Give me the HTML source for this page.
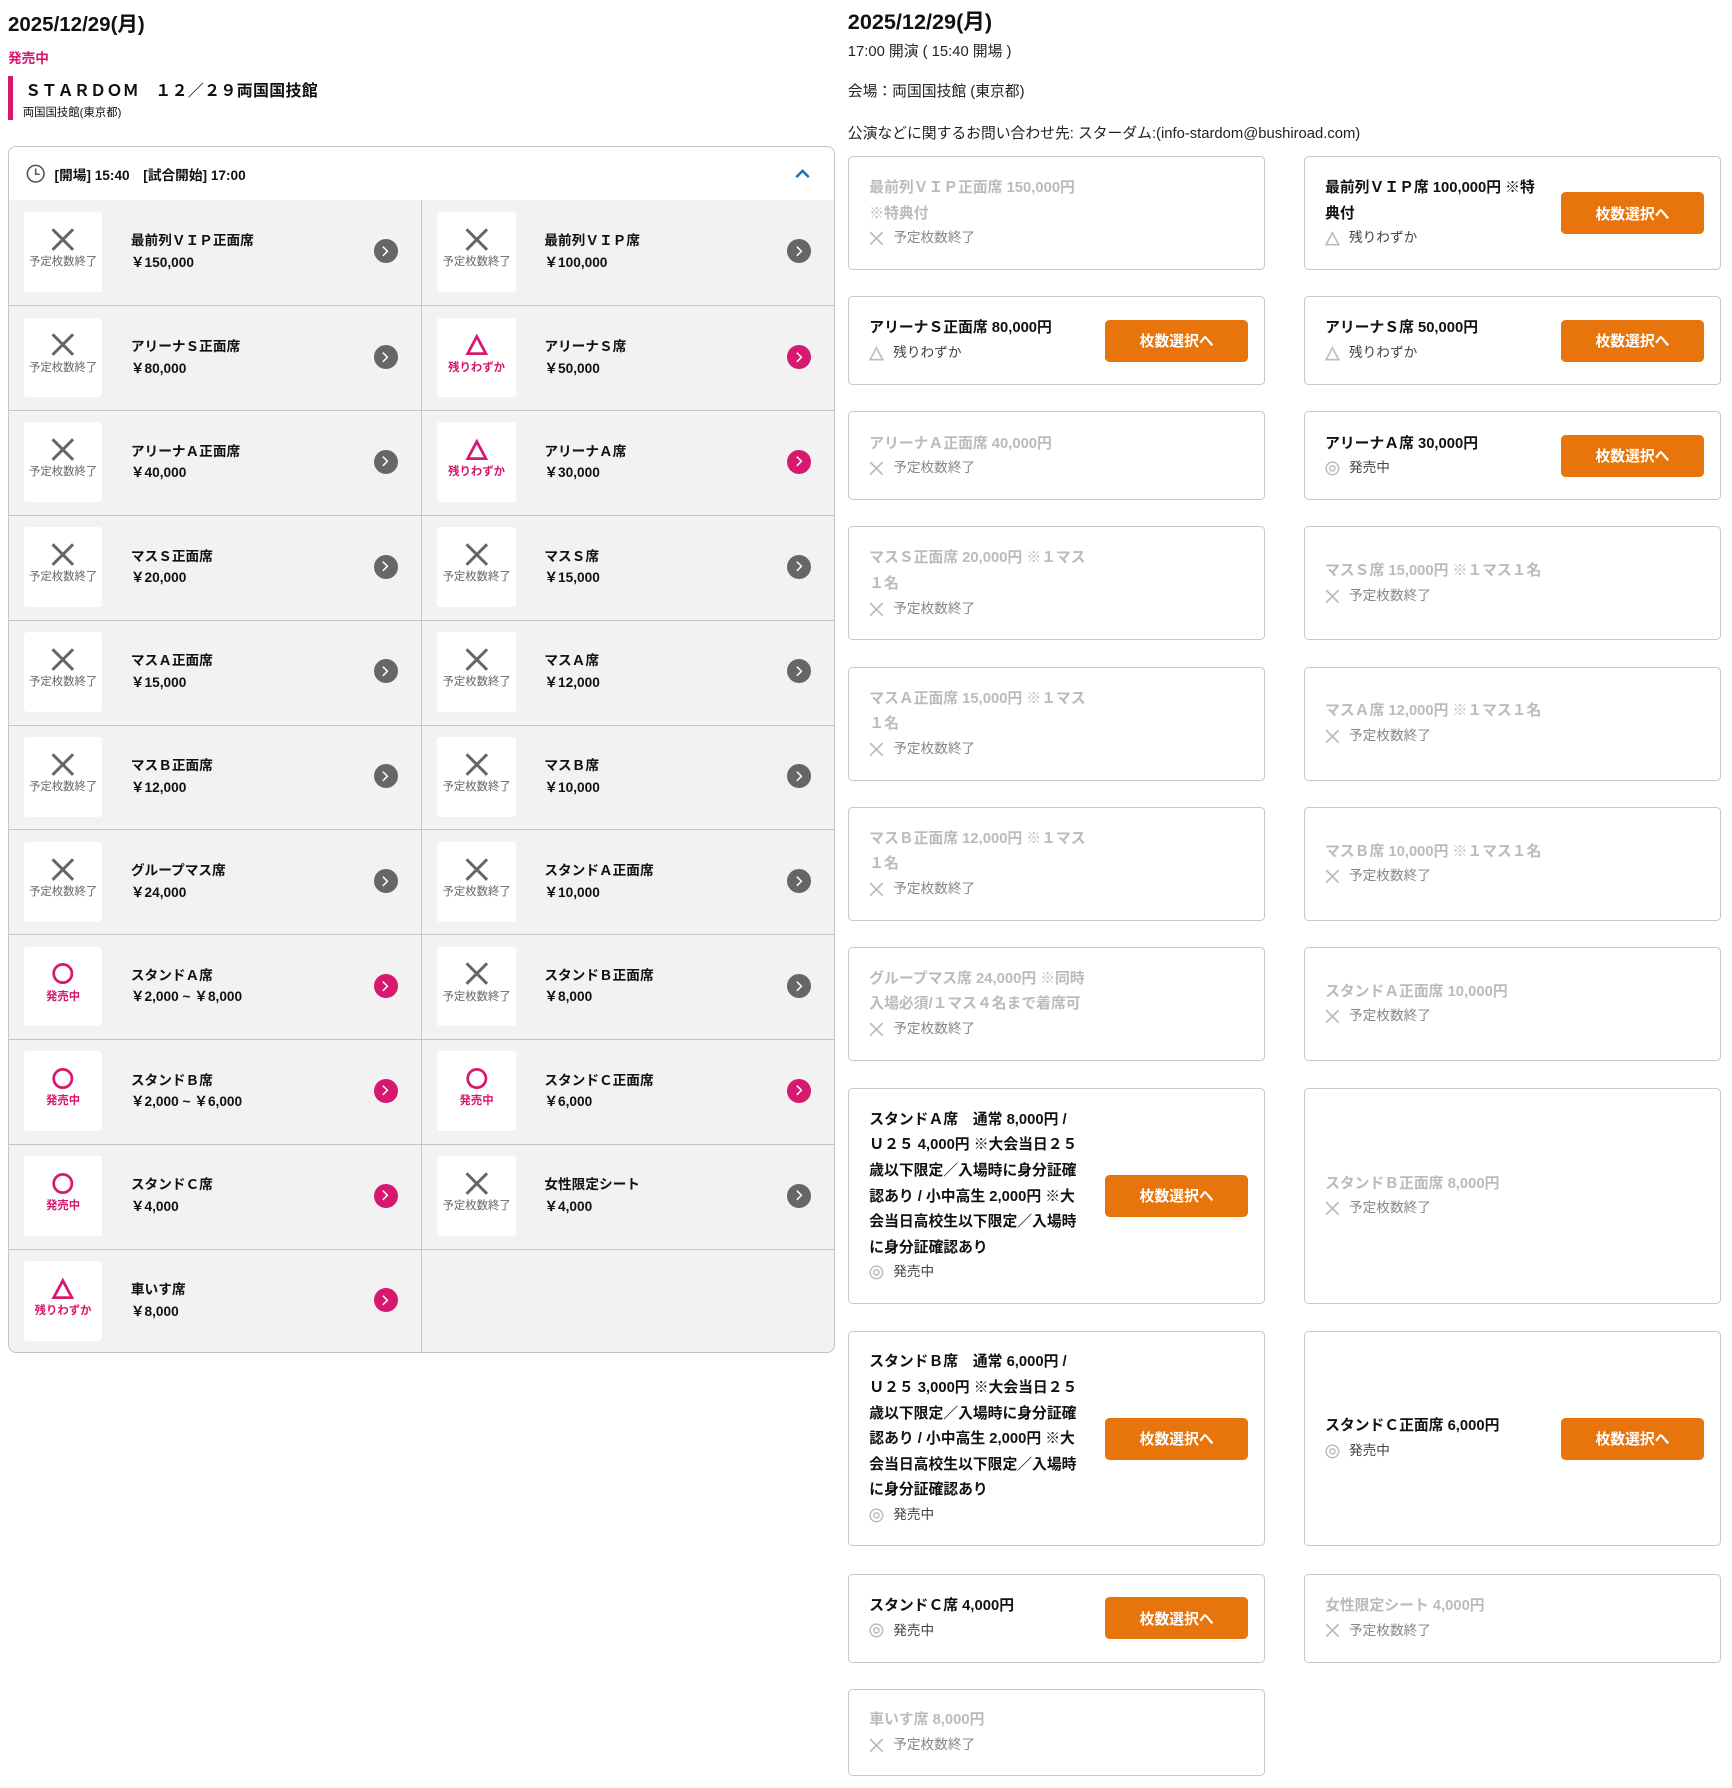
<!DOCTYPE html>
<html><head><meta charset="utf-8">
<style>
*{box-sizing:border-box;margin:0;padding:0}
html,body{width:1732px;height:1788px;overflow:hidden;background:#fff}
#w{zoom:1.1395;width:1520px;height:1569px;position:relative;font-family:"Liberation Sans","Noto Sans CJK JP",sans-serif;color:#111}
.a{position:absolute}
.pn{left:7px;top:128px;width:726px;height:1059px;border:1px solid #c4c4c4;border-radius:7px;overflow:hidden;background:#f2f2f2}
.hd{position:absolute;left:0;top:0;right:0;height:47px;background:#fff;font-size:12px;font-weight:bold;display:flex;align-items:center;padding-left:15px}
.grid{position:absolute;left:0;top:47px;width:726px}
.row{height:92px;display:flex;border-top:1px solid #c4c4c4}
.row:first-child{border-top:none}
.cell{width:362px;height:100%;position:relative}
.cell+.cell{border-left:1px solid #c4c4c4;width:364px}
.box{position:absolute;left:13px;top:10px;width:69px;height:70px;background:#fff;border-radius:3px;text-align:center;font-size:10px;color:#666}
.box svg{display:block;margin:13px auto 1px}
.box.p{color:#d6186e;font-weight:bold}
.nm{position:absolute;left:107px;top:26px;font-size:12px;font-weight:bold;line-height:19px}
.ar{position:absolute;left:320px;top:34px;width:21px;height:21px;border-radius:50%;background:#666}
.ar.p{background:#d6186e}
.ar svg{position:absolute;left:6px;top:5px}
.card{position:absolute;width:366px;border:1px solid #c8c8c8;border-radius:4px;display:flex;align-items:center;padding:0 14px 0 18px}
.c1{left:744px}.c2{left:1144px}
.t{width:205px;font-size:13px;font-weight:bold;line-height:22.5px;white-space:nowrap}
.d .t{color:#bbb}
.st{font-size:12px;font-weight:normal;color:#444;line-height:20px;display:flex;align-items:center}
.d .st{color:#888}
.st svg{margin-right:8px}
.btn{margin-left:auto;width:125px;height:37px;background:#e8740c;border-radius:4px;color:#fff;font-size:13px;font-weight:bold;display:flex;align-items:center;justify-content:center}
</style></head><body><div id="w">
<div class="a" style="left:7px;top:6px;font-size:18px;font-weight:bold">2025/12/29(月)</div>
<div class="a" style="left:7px;top:41px;font-size:12px;font-weight:bold;color:#d6186e">発売中</div>
<div class="a" style="left:7px;top:67px;width:4px;height:38px;background:#d6186e"></div>
<div class="a" style="left:22px;top:68px;font-size:14px;font-weight:bold;letter-spacing:0.3px">ＳＴＡＲＤＯＭ　１２／２９両国国技館</div>
<div class="a" style="left:20px;top:91px;font-size:10px">両国国技館(東京都)</div>

<div class="a pn">
<div class="hd"><svg width="17" height="17" viewBox="0 0 17 17"><circle cx="8.5" cy="8.5" r="7.3" fill="none" stroke="#555" stroke-width="1.4"/><path d="M8.5 4v5h3.5" fill="none" stroke="#555" stroke-width="1.4"/></svg><span style="margin-left:8px">[開場] 15:40　[試合開始] 17:00</span>
<svg style="position:absolute;left:689px;top:19px" width="15" height="10" viewBox="0 0 15 10"><path d="M2 8l5.5-5.5L13 8" fill="none" stroke="#1a73b8" stroke-width="2.2"/></svg></div>
<div class="grid" id="g"></div>
</div>

<div class="a" style="left:744px;top:4px;font-size:19px;font-weight:bold">2025/12/29(月)</div>
<div class="a" style="left:744px;top:35px;font-size:13px;color:#222">17:00 開演 ( 15:40 開場 )</div>
<div class="a" style="left:744px;top:70px;font-size:13px;color:#222">会場：両国国技館 (東京都)</div>
<div class="a" style="left:744px;top:107px;font-size:13px;color:#222">公演などに関するお問い合わせ先: スターダム:(info-stardom@bushiroad.com)</div>
<div id="cards"></div>
</div>
<script>
var X='<svg width="26" height="22" viewBox="0 0 26 22"><path d="M4 2l18 18M22 2L4 20" stroke="#666" stroke-width="2.6"/></svg>';
var T='<svg width="26" height="22" viewBox="0 0 26 22"><path d="M13 4L21 19H5z" fill="none" stroke="#d6186e" stroke-width="2.4"/></svg>';
var O='<svg width="26" height="22" viewBox="0 0 26 22"><circle cx="13" cy="11" r="8" fill="none" stroke="#d6186e" stroke-width="2.4"/></svg>';
var L={x:[X,'予定枚数終了',''],t:[T,'残りわずか','p'],o:[O,'発売中','p']};
var rows=[[["最前列ＶＩＰ正面席","￥150,000","x"],["最前列ＶＩＰ席","￥100,000","x"]],
[["アリーナＳ正面席","￥80,000","x"],["アリーナＳ席","￥50,000","t"]],
[["アリーナＡ正面席","￥40,000","x"],["アリーナＡ席","￥30,000","t"]],
[["マスＳ正面席","￥20,000","x"],["マスＳ席","￥15,000","x"]],
[["マスＡ正面席","￥15,000","x"],["マスＡ席","￥12,000","x"]],
[["マスＢ正面席","￥12,000","x"],["マスＢ席","￥10,000","x"]],
[["グループマス席","￥24,000","x"],["スタンドＡ正面席","￥10,000","x"]],
[["スタンドＡ席","￥2,000 ~ ￥8,000","o"],["スタンドＢ正面席","￥8,000","x"]],
[["スタンドＢ席","￥2,000 ~ ￥6,000","o"],["スタンドＣ正面席","￥6,000","o"]],
[["スタンドＣ席","￥4,000","o"],["女性限定シート","￥4,000","x"]],
[["車いす席","￥8,000","t"],null]];
var AR='<svg width="9" height="11" viewBox="0 0 9 11"><path d="M2.5 1.5l4 4-4 4" fill="none" stroke="#fff" stroke-width="1.3"/></svg>';
var h='';rows.forEach(function(r){h+='<div class="row">';r.forEach(function(c){if(!c){h+='<div class="cell"></div>';return;}var s=L[c[2]];h+='<div class="cell"><div class="box '+s[2]+'">'+s[0]+s[1]+'</div><div class="nm">'+c[0]+'<br>'+c[1]+'</div><div class="ar '+s[2]+'">'+AR+'</div></div>';});h+='</div>';});
document.getElementById('g').innerHTML=h;
var sX='<svg width="13" height="13" viewBox="0 0 13 13"><path d="M1 1l11 11M12 1L1 12" stroke="#bbb" stroke-width="1.5"/></svg>';
var sT='<svg width="13" height="13" viewBox="0 0 13 13"><path d="M6.5 1.5L12 12H1z" fill="none" stroke="#bbb" stroke-width="1.4"/></svg>';
var sO='<svg width="13" height="13" viewBox="0 0 13 13"><circle cx="6.5" cy="6.5" r="5.5" fill="none" stroke="#bbb" stroke-width="1.3"/><circle cx="6.5" cy="6.5" r="2.3" fill="none" stroke="#bbb" stroke-width="1.3"/></svg>';
var S={x:[sX,'予定枚数終了'],t:[sT,'残りわずか'],o:[sO,'発売中']};
var LA="スタンドＡ席　通常 8,000円 /<br>Ｕ２５ 4,000円 ※大会当日２５<br>歳以下限定／入場時に身分証確<br>認あり / 小中高生 2,000円 ※大<br>会当日高校生以下限定／入場時<br>に身分証確認あり";
var LB="スタンドＢ席　通常 6,000円 /<br>Ｕ２５ 3,000円 ※大会当日２５<br>歳以下限定／入場時に身分証確<br>認あり / 小中高生 2,000円 ※大<br>会当日高校生以下限定／入場時<br>に身分証確認あり";
var C=[[137,100,"最前列ＶＩＰ正面席 150,000円<br>※特典付","x","最前列ＶＩＰ席 100,000円 ※特<br>典付","t"],
[260,78,"アリーナＳ正面席 80,000円","t","アリーナＳ席 50,000円","t"],
[361,78,"アリーナＡ正面席 40,000円","x","アリーナＡ席 30,000円","o"],
[462,100,"マスＳ正面席 20,000円 ※１マス<br>１名","x","マスＳ席 15,000円 ※１マス１名","x"],
[585,100,"マスＡ正面席 15,000円 ※１マス<br>１名","x","マスＡ席 12,000円 ※１マス１名","x"],
[708,100,"マスＢ正面席 12,000円 ※１マス<br>１名","x","マスＢ席 10,000円 ※１マス１名","x"],
[831,100,"グループマス席 24,000円 ※同時<br>入場必須/１マス４名まで着席可","x","スタンドＡ正面席 10,000円","x"],
[955,189,LA,"o","スタンドＢ正面席 8,000円","x"],
[1168,189,LB,"o","スタンドＣ正面席 6,000円","o"],
[1381,78,"スタンドＣ席 4,000円","o","女性限定シート 4,000円","x"],
[1482,77,"車いす席 8,000円","x",null,null]];
var k='';C.forEach(function(c){[[c[2],c[3],'c1'],[c[4],c[5],'c2']].forEach(function(q){if(!q[0])return;var d=q[1]=='x';var s=S[q[1]];
k+='<div class="card '+q[2]+(d?' d':'')+'" style="top:'+c[0]+'px;height:'+c[1]+'px"><div class="t">'+q[0]+'<div class="st">'+s[0]+s[1]+'</div></div>'+(d?'':'<div class="btn">枚数選択へ</div>')+'</div>';});});
document.getElementById('cards').innerHTML=k;
</script>
</body></html>
